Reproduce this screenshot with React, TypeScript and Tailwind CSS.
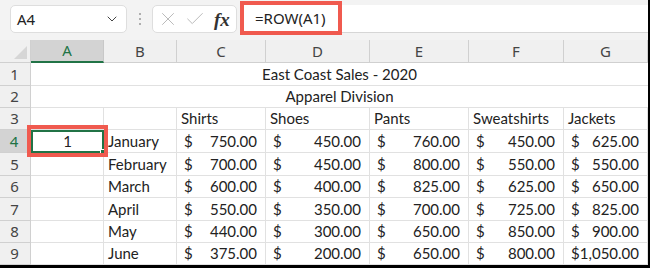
import React from "react";
import { ChevronDown, X, Check } from "lucide-react";

// column widths: row header, A..G
const cols = [31, 73, 73, 89, 104, 99, 95, 84];
const letters = ["A", "B", "C", "D", "E", "F", "G"];
const rowHeights = [23, 22, 22, 23, 23, 22, 23, 22, 22];

const heads = ["Shirts", "Shoes", "Pants", "Sweatshirts", "Jackets"];

const data = [
  ["January", "750.00", "450.00", "760.00", "450.00", "625.00"],
  ["February", "700.00", "450.00", "800.00", "550.00", "550.00"],
  ["March", "600.00", "400.00", "825.00", "625.00", "650.00"],
  ["April", "550.00", "350.00", "700.00", "725.00", "825.00"],
  ["May", "440.00", "300.00", "650.00", "850.00", "900.00"],
  ["June", "375.00", "200.00", "650.00", "800.00", "1,050.00"],
];

function RowHead({ n, h, active }: { n: number; h: number; active?: boolean }) {
  return (
    <div
      className={
        "shrink-0 flex items-center justify-center pr-[1px] font-['Noto_Sans',sans-serif] text-[15px] border-r border-b border-[#d0d0d0] " +
        (active ? "bg-[#d3d3d3] text-[#217346] border-r-2 border-r-[#217346]" : "bg-[#f0f0f0] text-[#444]")
      }
      style={{ width: cols[0], height: h }}
    >
      {n}
    </div>
  );
}

function Money({ w, v, tight }: { w: number; v: string; tight?: boolean }) {
  return (
    <div
      className="shrink-0 flex items-center justify-between pl-[7px] pr-[8px] border-r border-b border-[#e1e1e1]"
      style={{ width: w }}
    >
      <span>$</span>
      <span className={tight ? "-ml-1" : ""}>{v}</span>
    </div>
  );
}

export default function App() {
  return (
    <div className="w-[650px] h-[268px] overflow-hidden bg-white border-r-2 border-b-[3px] border-black font-['Lato','Liberation_Sans',sans-serif] text-[15px] text-[#222]">
      {/* formula bar */}
      <div className="h-[40px] bg-[#f3f3f3] flex items-start pt-[5px] pl-[10px] relative">
        <div className="w-[117px] h-[28px] bg-white border border-[#dedede] rounded-[5px] flex items-center justify-between pl-[6px] pr-[6px] font-['Noto_Sans',sans-serif] text-[15px] text-[#222]">
          <span>A4</span>
          <ChevronDown size={16} strokeWidth={1.5} className="text-[#444]" />
        </div>
        <div className="w-[25px] h-[28px] flex flex-col items-center justify-center gap-[3px]">
          <span className="w-[2px] h-[2px] bg-[#999] rounded-full" />
          <span className="w-[2px] h-[2px] bg-[#999] rounded-full" />
          <span className="w-[2px] h-[2px] bg-[#999] rounded-full" />
        </div>
        <div className="w-[85px] h-[28px] bg-white border border-[#dedede] rounded-[5px] flex items-center pl-[4px] gap-[5px]">
          <X size={22} strokeWidth={1} className="text-[#b5b5b5]" />
          <Check size={22} strokeWidth={1} className="text-[#b5b5b5]" />
          <span className="font-['Liberation_Serif',serif] italic font-bold text-[19px] text-[#333] leading-none ml-[3px]">
            fx
          </span>
        </div>
        <div className="ml-[4px] flex-1 h-[28px] bg-white border-b border-[#d6d6d6] flex items-center pl-[14px] font-['Noto_Sans',sans-serif] text-[15px] text-[#222]">
          =ROW(A1)
        </div>
        <div className="absolute left-[240px] top-[1px] w-[102px] h-[34px] border-[4px] border-[#f05a4f]" />
      </div>

      {/* column headers */}
      <div className="flex h-[23px] bg-[#f0f0f0] font-['Noto_Sans',sans-serif] text-[#444] text-[15px]">
        <div className="shrink-0 relative border-r border-b border-[#d0d0d0]" style={{ width: cols[0] }}>
          <div className="absolute right-[3px] bottom-[3px] w-0 h-0 border-l-[13px] border-l-transparent border-b-[13px] border-b-[#d6d6d6]" />
        </div>
        {letters.map((l, i) => (
          <div
            key={l}
            className={
              "shrink-0 flex items-center justify-center border-r " +
              (i === 0
                ? "bg-[#d3d3d3] text-[#217346] border-b-2 border-b-[#217346] border-r-[#c8c8c8]"
                : "border-b border-[#d0d0d0]")
            }
            style={{ width: cols[i + 1] }}
          >
            {l}
          </div>
        ))}
      </div>

      {/* row 1 and 2: merged titles */}
      {["East Coast Sales - 2020", "Apparel Division"].map((t, r) => (
        <div key={t} className="flex" style={{ height: rowHeights[r] }}>
          <RowHead n={r + 1} h={rowHeights[r]} />
          <div className="flex-1 flex items-center justify-center border-b border-[#e1e1e1]">{t}</div>
        </div>
      ))}

      {/* row 3 */}
      <div className="flex" style={{ height: rowHeights[2] }}>
        <RowHead n={3} h={rowHeights[2]} />
        <div className="shrink-0 border-r border-b border-[#e1e1e1]" style={{ width: cols[1] }} />
        <div className="shrink-0 border-r border-b border-[#e1e1e1]" style={{ width: cols[2] }} />
        {heads.map((h, i) => (
          <div
            key={h}
            className="shrink-0 flex items-center pl-[4px] border-r border-b border-[#e1e1e1]"
            style={{ width: cols[i + 3] }}
          >
            {h}
          </div>
        ))}
      </div>

      {/* data rows */}
      {data.map((row, r) => {
        const h = rowHeights[r + 3];
        const active = r === 0;
        return (
          <div key={row[0]} className="flex" style={{ height: h }}>
            <RowHead n={r + 4} h={h} active={active} />
            {active ? (
              <div className="shrink-0 relative border-2 border-[#217346] flex items-center justify-center" style={{ width: cols[1] }}>
                1
                <div className="absolute -right-[4px] -bottom-[4px] w-[6px] h-[6px] bg-[#217346] border border-white" />
                <div className="absolute -left-[6px] -top-[7px] -right-[6px] -bottom-[6px] border-[4px] border-[#f05a4f]" />
              </div>
            ) : (
              <div className="shrink-0 border-r border-b border-[#e1e1e1]" style={{ width: cols[1] }} />
            )}
            <div className="shrink-0 flex items-center pl-[4px] border-r border-b border-[#e1e1e1]" style={{ width: cols[2] }}>
              {row[0]}
            </div>
            {row.slice(1).map((v, i) => (
              <Money key={i} w={cols[i + 3]} v={v} tight={v.length > 6} />
            ))}
          </div>
        );
      })}
    </div>
  );
}
